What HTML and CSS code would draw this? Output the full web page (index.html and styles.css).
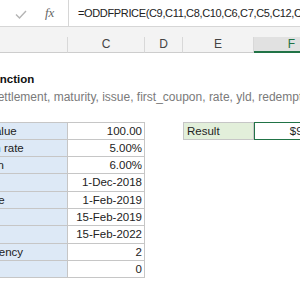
FILE: index.html
```html
<!DOCTYPE html>
<html lang="en">
<head>
    <meta charset="UTF-8">
    <meta name="viewport" content="width=device-width, initial-scale=1.0">
    <title>ODDFPRICE function</title>
    <link rel="stylesheet" href="styles.css">
</head>
<body>
    <div class="toolbar">
        <div class="formula-bar">
            <div class="fb-buttons">
                <svg class="check" width="12" height="9" viewBox="0 0 12 9">
                    <polyline points="1,4.5 4.5,8 11,1" fill="none" stroke="#b4b4b4" stroke-width="1.4"/>
                </svg>
                <span class="fx">fx</span>
            </div>
            <div class="fb-input">=ODDFPRICE(C9,C11,C8,C10,C6,C7,C5,C12,C13)</div>
        </div>
    </div>

    <div class="sheet">
        <!-- column headers -->
        <div class="col-head">A</div>
        <div class="col-head">B</div>
        <div class="col-head">C</div>
        <div class="col-head">D</div>
        <div class="col-head">E</div>
        <div class="col-head selected">F</div>

        <!-- Row 1 -->
        <div class="row-full"></div>

        <!-- Row 2-3: title and syntax -->
        <div class="row-full title">ODDFPRICE function</div>
        <div class="row-full desc">=ODDFPRICE(settlement, maturity, issue, first_coupon, rate, yld, redemption, frequency, [basis])</div>

        <!-- Row 4 -->
        <div class="row-full"></div>

        <!-- Row 5 -->
        <div></div>
        <div class="cell label first">Redemption value</div>
        <div class="cell value first">100.00</div>
        <div></div>
        <div class="cell result-label">Result</div>
        <div class="cell result-value">$95.88</div>

        <div></div>
        <div class="cell label">Annual coupon rate</div>
        <div class="cell value">5.00%</div>
        <div class="rest"></div>

        <div></div>
        <div class="cell label">Required return</div>
        <div class="cell value">6.00%</div>
        <div class="rest"></div>

        <div></div>
        <div class="cell label">Issue date</div>
        <div class="cell value">1-Dec-2018</div>
        <div class="rest"></div>

        <div></div>
        <div class="cell label">Settlement date</div>
        <div class="cell value">1-Feb-2019</div>
        <div class="rest"></div>

        <div></div>
        <div class="cell label">First coupon</div>
        <div class="cell value">15-Feb-2019</div>
        <div class="rest"></div>

        <div></div>
        <div class="cell label">Maturity date</div>
        <div class="cell value">15-Feb-2022</div>
        <div class="rest"></div>

        <div></div>
        <div class="cell label">Payment frequency</div>
        <div class="cell value">2</div>
        <div class="rest"></div>

        <div></div>
        <div class="cell label">Basis</div>
        <div class="cell value">0</div>
        <div class="rest"></div>

        <div class="row-full"></div>
        <div class="row-full"></div>
    </div>
</body>
</html>
```

FILE: styles.css
```css
body {
    margin: 0;
    padding: 0;
    width: 300px;
    height: 300px;
    overflow: hidden;
    background-color: #fff;
    font-family: "Liberation Sans", Arial, sans-serif;
    color: #222;
}

.toolbar {
    background-color: #f3f3f3;
    padding-bottom: 10px;
}

.formula-bar {
    display: flex;
    height: 27px;
    background-color: #fff;
    border-bottom: 1px solid #d6d6d6;
    box-sizing: border-box;
}

.fb-buttons {
    width: 68px;
    display: flex;
    align-items: center;
    padding-left: 15px;
    box-sizing: border-box;
}

.check {
    margin-top: 2px;
}

.fx {
    margin-left: 18px;
    font-family: "Liberation Serif", serif;
    font-style: italic;
    font-size: 13px;
    color: #666;
}

.fb-input {
    flex: 1;
    border-left: 1px solid #d6d6d6;
    padding-left: 9px;
    line-height: 27px;
    font-size: 11px;
    letter-spacing: -0.35px;
    white-space: nowrap;
    overflow: hidden;
    color: #222;
}

.sheet {
    display: grid;
    grid-template-columns: 10px 151px 77px 38px 71px 76px;
    grid-template-rows: 16px;
    grid-auto-rows: 17.33px;
    margin-left: -93px;
}

.col-head {
    background-color: #f3f3f3;
    border-right: 1px solid #d8d8d8;
    border-bottom: 1px solid #cdcdcd;
    font-size: 12px;
    color: #444;
    text-align: center;
    line-height: 15px;
    box-sizing: border-box;
}

.col-head.selected {
    background-color: #e1e1e1;
    color: #217346;
    border-bottom: 2px solid #217346;
}

.row-full {
    grid-column: 1 / -1;
    white-space: nowrap;
}

.title {
    padding-left: 11px;
    font-size: 11.5px;
    font-weight: bold;
    line-height: 18px;
    color: #111;
}

.desc {
    padding-left: 3px;
    font-size: 12px;
    line-height: 19px;
    color: #7a7a7a;
}

.rest {
    grid-column: 4 / -1;
}

.cell {
    font-size: 11.5px;
    line-height: 17px;
    padding: 0 3px;
    border-right: 1px solid #c6c6c6;
    border-bottom: 1px solid #c6c6c6;
    white-space: nowrap;
    overflow: hidden;
    box-sizing: border-box;
}

.cell.first {
    border-top: 1px solid #c6c6c6;
}

.label {
    background-color: #dde9f6;
    padding-left: 7px;
}

.value {
    text-align: right;
    padding-right: 2px;
}

.result-label {
    background-color: #e2efda;
    border-top: 1px solid #c6c6c6;
    border-left: 1px solid #c6c6c6;
}

.result-value {
    text-align: right;
    border: 1px solid #217346;
    padding-right: 4px;
}
```
